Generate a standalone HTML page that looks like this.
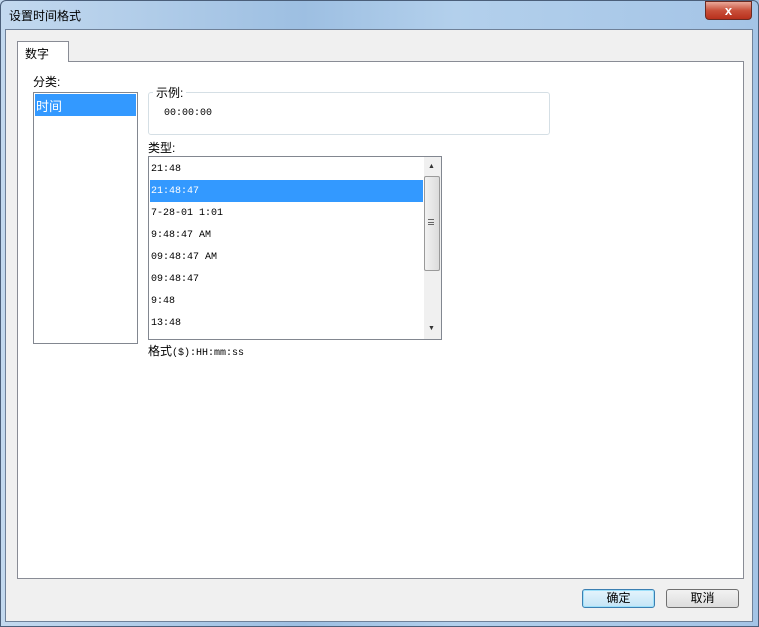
<!DOCTYPE html>
<html><head><meta charset="utf-8"><style>
*{margin:0;padding:0;box-sizing:border-box}
body{width:759px;height:627px;overflow:hidden;font-family:"Liberation Sans","Noto Sans CJK SC",sans-serif;font-size:12px;color:#000;position:relative;background:linear-gradient(90deg,#c3d9ef,#9dbfe2 40%,#b3d0ec 60%,#a4c4e6);}
.a{position:absolute}
.mono{font-family:"Liberation Mono","Noto Sans CJK SC",monospace;font-size:10px}
</style></head><body>
<div class="a" style="left:0;top:0;width:759px;height:627px;border:1px solid #4b5f7a;border-radius:6px 6px 0 0;"></div>
<div class="a" style="left:9px;top:7px;font-size:12px">设置时间格式</div>
<div class="a" style="left:705px;top:1px;width:47px;height:19px;border:1px solid #6b2a22;border-radius:0 0 4px 4px;background:linear-gradient(#e9a99a,#c9503a 50%,#b8301c);color:#fff;font-weight:bold;text-align:center;line-height:17px;font-size:13px">x</div>
<div class="a" style="left:5px;top:29px;width:748px;height:593px;background:#f0f0f0;border:1px solid #6f8199"></div>
<div class="a" style="left:17px;top:61px;width:727px;height:518px;background:#fff;border:1px solid #898c95"></div>
<div class="a" style="left:17px;top:41px;width:52px;height:21px;background:#fff;border:1px solid #898c95;border-bottom:none;padding:3px 0 0 7px">数字</div>
<div class="a" style="left:33px;top:73px">分类:</div>
<div class="a" style="left:33px;top:92px;width:105px;height:252px;border:1px solid #828790;background:#fff"></div>
<div class="a" style="left:35px;top:94px;width:101px;height:22px;background:#3399ff;color:#fff;padding:2px 0 0 1px;font-size:13px">时间</div>
<div class="a" style="left:148px;top:92px;width:402px;height:43px;border:1px solid #d5dfe5;border-radius:3px"></div>
<div class="a" style="left:153px;top:84px;background:#fff;padding:0 3px">示例:</div>
<div class="a mono" style="left:164px;top:108px">00:00:00</div>
<div class="a" style="left:148px;top:139px">类型:</div>
<div class="a" style="left:148px;top:156px;width:294px;height:184px;border:1px solid #828790;background:#fff"></div>
<div class="a" style="left:150px;top:180px;width:273px;height:22px;background:#3399ff"></div>
<div class="a mono" style="left:151px;top:158px;line-height:22px;padding-top:1px">
<div>21:48</div><div style="color:#fff">21:48:47</div><div>7-28-01 1:01</div><div>9:48:47 AM</div><div>09:48:47 AM</div><div>09:48:47</div><div>9:48</div><div>13:48</div></div>
<div class="a" style="left:424px;top:157px;width:17px;height:182px;background:#f0f0f0"></div>
<div class="a" style="left:428px;top:163px;font-size:7px;color:#333">▲</div>
<div class="a" style="left:428px;top:325px;font-size:7px;color:#333">▼</div>
<div class="a" style="left:424px;top:176px;width:16px;height:95px;border:1px solid #9a9a9a;border-radius:2px;background:linear-gradient(90deg,#f2f2f2,#dcdcdc)"></div>
<div class="a" style="left:428px;top:219px;width:6px;height:6px;border-top:1px solid #666;border-bottom:1px solid #666"></div>
<div class="a" style="left:428px;top:222px;width:6px;height:1px;background:#666"></div>
<div class="a mono" style="left:148px;top:342px"><span style="font-family:'Liberation Sans','Noto Sans CJK SC',sans-serif;font-size:12px">格式</span>($):HH:mm:ss</div>
<div class="a" style="left:582px;top:589px;width:73px;height:19px;border:1px solid #3c7fb1;border-radius:3px;background:linear-gradient(#e5f4fc,#c4e5f6);text-align:center;line-height:17px;box-shadow:inset 0 0 0 1px #9ce0fa">确定</div>
<div class="a" style="left:666px;top:589px;width:73px;height:19px;border:1px solid #707070;border-radius:3px;background:linear-gradient(#f2f2f2,#dddddd);text-align:center;line-height:17px">取消</div>
</body></html>
